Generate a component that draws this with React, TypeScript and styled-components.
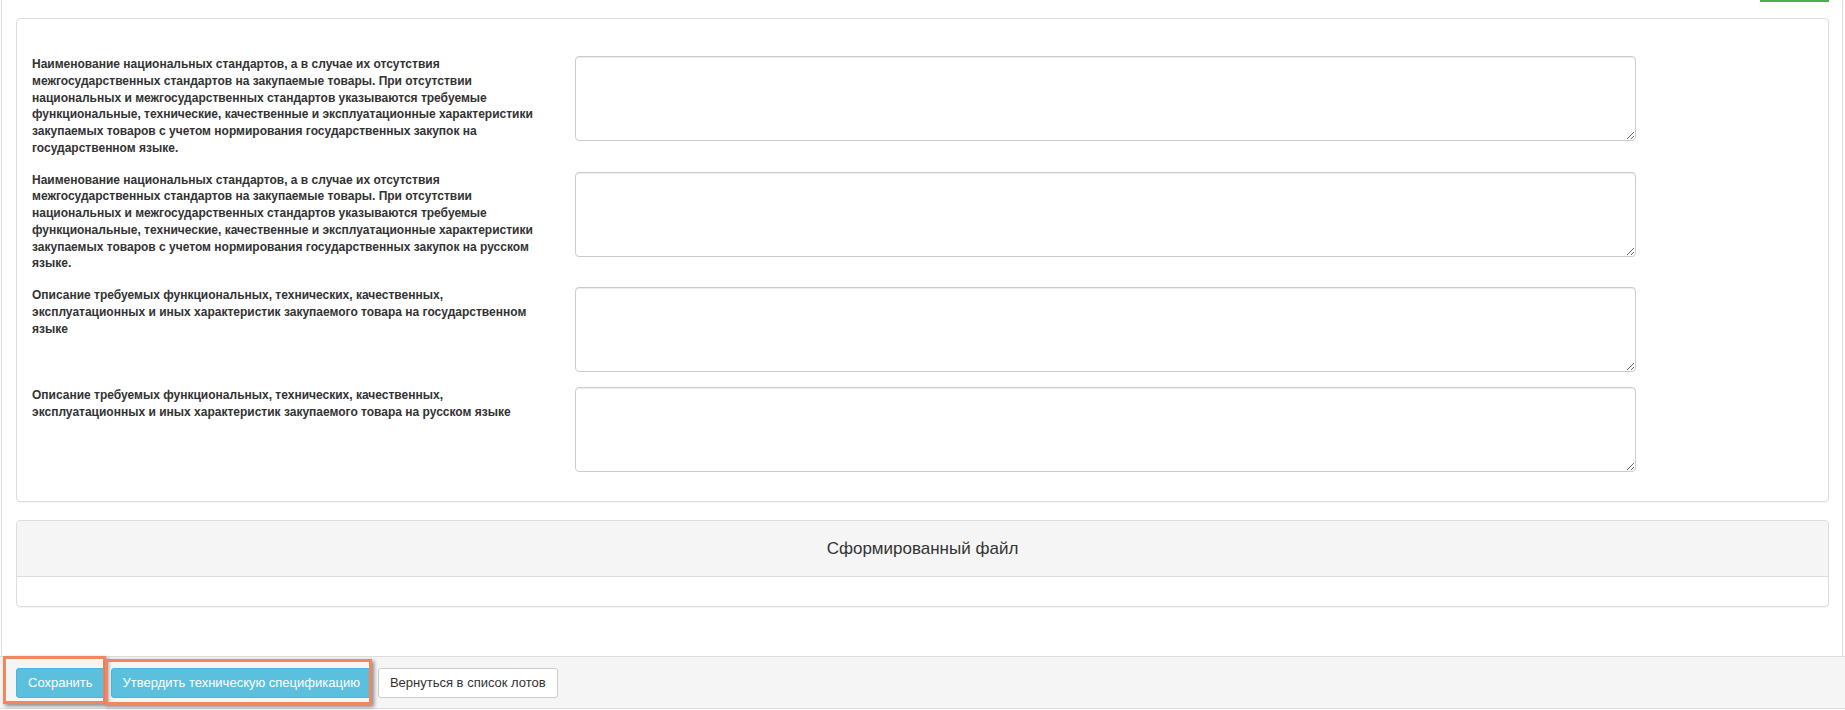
import React from "react";
import styled, { createGlobalStyle } from "styled-components";

const GlobalStyle = createGlobalStyle`
  html, body {
    margin: 0;
    padding: 0;
    background: #ffffff;
    font-family: "Liberation Sans", Arial, sans-serif;
    color: #333333;
  }
  * { box-sizing: border-box; }
`;

const Screen = styled.div`
  width: 1845px;
  height: 710px;
  overflow: hidden;
  display: flex;
  flex-direction: column;
`;

const PageFrame = styled.div`
  margin-left: 1px;
  width: 1842px;
  border-left: 1px solid #dddddd;
  border-right: 1px solid #dddddd;
  padding: 0 13px 49px 14px;
  display: flex;
  flex-direction: column;
`;

const TopStub = styled.div`
  display: flex;
  justify-content: flex-end;
  height: 2px;
`;

const GreenEdge = styled.div`
  width: 69px;
  height: 2px;
  background: #4cae4c;
`;

const Panel = styled.div<{ $gap: number }>`
  margin-top: ${(p) => p.$gap}px;
  border: 1px solid #dddddd;
  border-radius: 4px;
  background: #ffffff;
  box-shadow: 0 1px 1px rgba(0, 0, 0, 0.04);
`;

const FormBody = styled.div`
  padding: 37px 15px 14px 15px;
  display: flex;
  flex-direction: column;
`;

const FormRow = styled.div`
  display: grid;
  grid-template-columns: 543px 1061px;
  align-items: start;
  margin-bottom: 15px;
`;

const FieldLabel = styled.label`
  display: block;
  width: 520px;
  font-size: 12px;
  font-weight: bold;
  line-height: 16.75px;
  color: #333333;
`;

const TextArea = styled.textarea`
  display: block;
  width: 1061px;
  height: 85px;
  margin: 0;
  padding: 6px 12px;
  border: 1px solid #cccccc;
  border-radius: 4px;
  background: #ffffff;
  box-shadow: inset 0 1px 1px rgba(0, 0, 0, 0.075);
  font-family: "Liberation Sans", Arial, sans-serif;
  font-size: 13px;
  color: #555555;
  resize: both;
  outline: none;
`;

const PanelHeading = styled.div`
  height: 56px;
  background: #f5f5f5;
  border-bottom: 1px solid #dddddd;
  border-radius: 3px 3px 0 0;
  display: flex;
  align-items: center;
  justify-content: center;
`;

const PanelTitle = styled.h3`
  margin: 0;
  font-size: 17px;
  font-weight: normal;
  color: #333333;
  line-height: 20px;
`;

const PanelBodyEmpty = styled.div`
  height: 29px;
`;

const Footer = styled.div`
  position: relative;
  width: 1845px;
  background: #f5f5f5;
  border-top: 1px solid #dddddd;
  border-bottom: 1px solid #dddddd;
  padding: 11px 16px 10px 16px;
  display: flex;
  gap: 6px;
`;

const Button = styled.button<{ $variant: "info" | "default" }>`
  height: 30px;
  padding: 0 11px;
  font-family: "Liberation Sans", Arial, sans-serif;
  font-size: 13px;
  line-height: 28px;
  border-radius: 3px;
  cursor: pointer;
  white-space: nowrap;
  background: ${(p) => (p.$variant === "info" ? "#5bc0de" : "#ffffff")};
  border: 1px solid ${(p) => (p.$variant === "info" ? "#46b8da" : "#cccccc")};
  color: ${(p) => (p.$variant === "info" ? "#ffffff" : "#333333")};
`;

const Highlight = styled.div<{ $left: number; $top: number; $w: number; $h: number }>`
  position: absolute;
  left: ${(p) => p.$left}px;
  top: ${(p) => p.$top}px;
  width: ${(p) => p.$w}px;
  height: ${(p) => p.$h}px;
  border: 3px solid #ef8760;
  box-shadow: 2px 2px 4px rgba(0, 0, 0, 0.45);
  pointer-events: none;
`;

const fields = [
  "Наименование национальных стандартов, а в случае их отсутствия межгосударственных стандартов на закупаемые товары. При отсутствии национальных и межгосударственных стандартов указываются требуемые функциональные, технические, качественные и эксплуатационные характеристики закупаемых товаров с учетом нормирования государственных закупок на государственном языке.",
  "Наименование национальных стандартов, а в случае их отсутствия межгосударственных стандартов на закупаемые товары. При отсутствии национальных и межгосударственных стандартов указываются требуемые функциональные, технические, качественные и эксплуатационные характеристики закупаемых товаров с учетом нормирования государственных закупок на русском языке.",
  "Описание требуемых функциональных, технических, качественных, эксплуатационных и иных характеристик закупаемого товара на государственном языке",
  "Описание требуемых функциональных, технических, качественных, эксплуатационных и иных характеристик закупаемого товара на русском языке",
];

export default function App() {
  return (
    <Screen>
      <GlobalStyle />
      <PageFrame>
        <TopStub>
          <GreenEdge />
        </TopStub>
        <Panel $gap={16}>
          <FormBody>
            {fields.map((text, i) => (
              <FormRow key={i}>
                <FieldLabel htmlFor={`field-${i}`}>{text}</FieldLabel>
                <TextArea id={`field-${i}`} />
              </FormRow>
            ))}
          </FormBody>
        </Panel>
        <Panel $gap={18}>
          <PanelHeading>
            <PanelTitle>Сформированный файл</PanelTitle>
          </PanelHeading>
          <PanelBodyEmpty />
        </Panel>
      </PageFrame>
      <Footer>
        <Button $variant="info">Сохранить</Button>
        <Button $variant="info">Утвердить техническую спецификацию</Button>
        <Button $variant="default">Вернуться в список лотов</Button>
        <Highlight $left={3} $top={-1} $w={103} $h={48} />
        <Highlight $left={105} $top={2} $w={267} $h={46} />
      </Footer>
    </Screen>
  );
}
